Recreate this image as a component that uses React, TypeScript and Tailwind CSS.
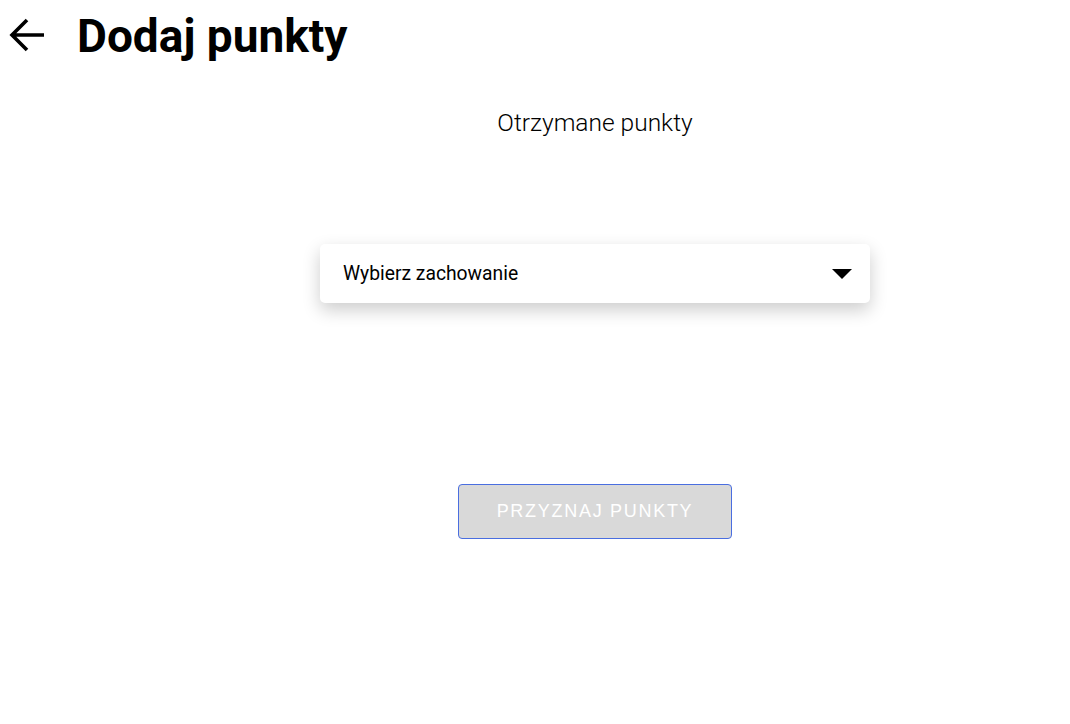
import React, { useState } from "react";

const behaviours = ["Wybierz zachowanie"];

export default function App() {
  const [selected] = useState(behaviours[0]);

  return (
    <div className="min-h-screen w-full bg-white text-black" style={{ fontFamily: "Roboto, sans-serif" }}>
      {/* Header */}
      <header className="flex items-center h-[72px] pl-[8px]">
        <button className="flex items-center justify-center w-[36px] h-[36px] mt-[-2px]" aria-label="Wróć">
          <svg viewBox="0 0 36 36" width="36" height="36">
            <path d="M36 18H4M19 3L4 18L19 33" fill="none" stroke="#000" strokeWidth="3.6" strokeLinejoin="miter" />
          </svg>
        </button>
        <h1 className="ml-[33px] text-[46px] font-bold leading-none">Dodaj punkty</h1>
      </header>

      {/* Content */}
      <main className="flex flex-col items-center pl-[120px]">
        <p className="mt-[36px] text-[24.5px] font-light leading-[30px]">Otrzymane punkty</p>

        <div className="mt-[106px] w-[550px] h-[59px] rounded-[5px] bg-white shadow-[0_7px_18px_rgba(0,0,0,0.2)] flex items-center justify-between pl-[23px] pr-[18px] cursor-pointer">
          <span className="text-[19.3px] leading-none">{selected}</span>
          <svg viewBox="0 0 20 10" width="20" height="10">
            <path d="M0 0H20L10 10Z" fill="#000" />
          </svg>
        </div>

        <button
          disabled
          className="mt-[181px] w-[274px] h-[55px] rounded-[4px] border border-[#4a6ee0] bg-[#d9d9d9] text-white text-[18px] tracking-[0.095em]"
          style={{ fontFamily: "'Liberation Sans', Arial, sans-serif" }}
        >
          PRZYZNAJ PUNKTY
        </button>
      </main>
    </div>
  );
}
